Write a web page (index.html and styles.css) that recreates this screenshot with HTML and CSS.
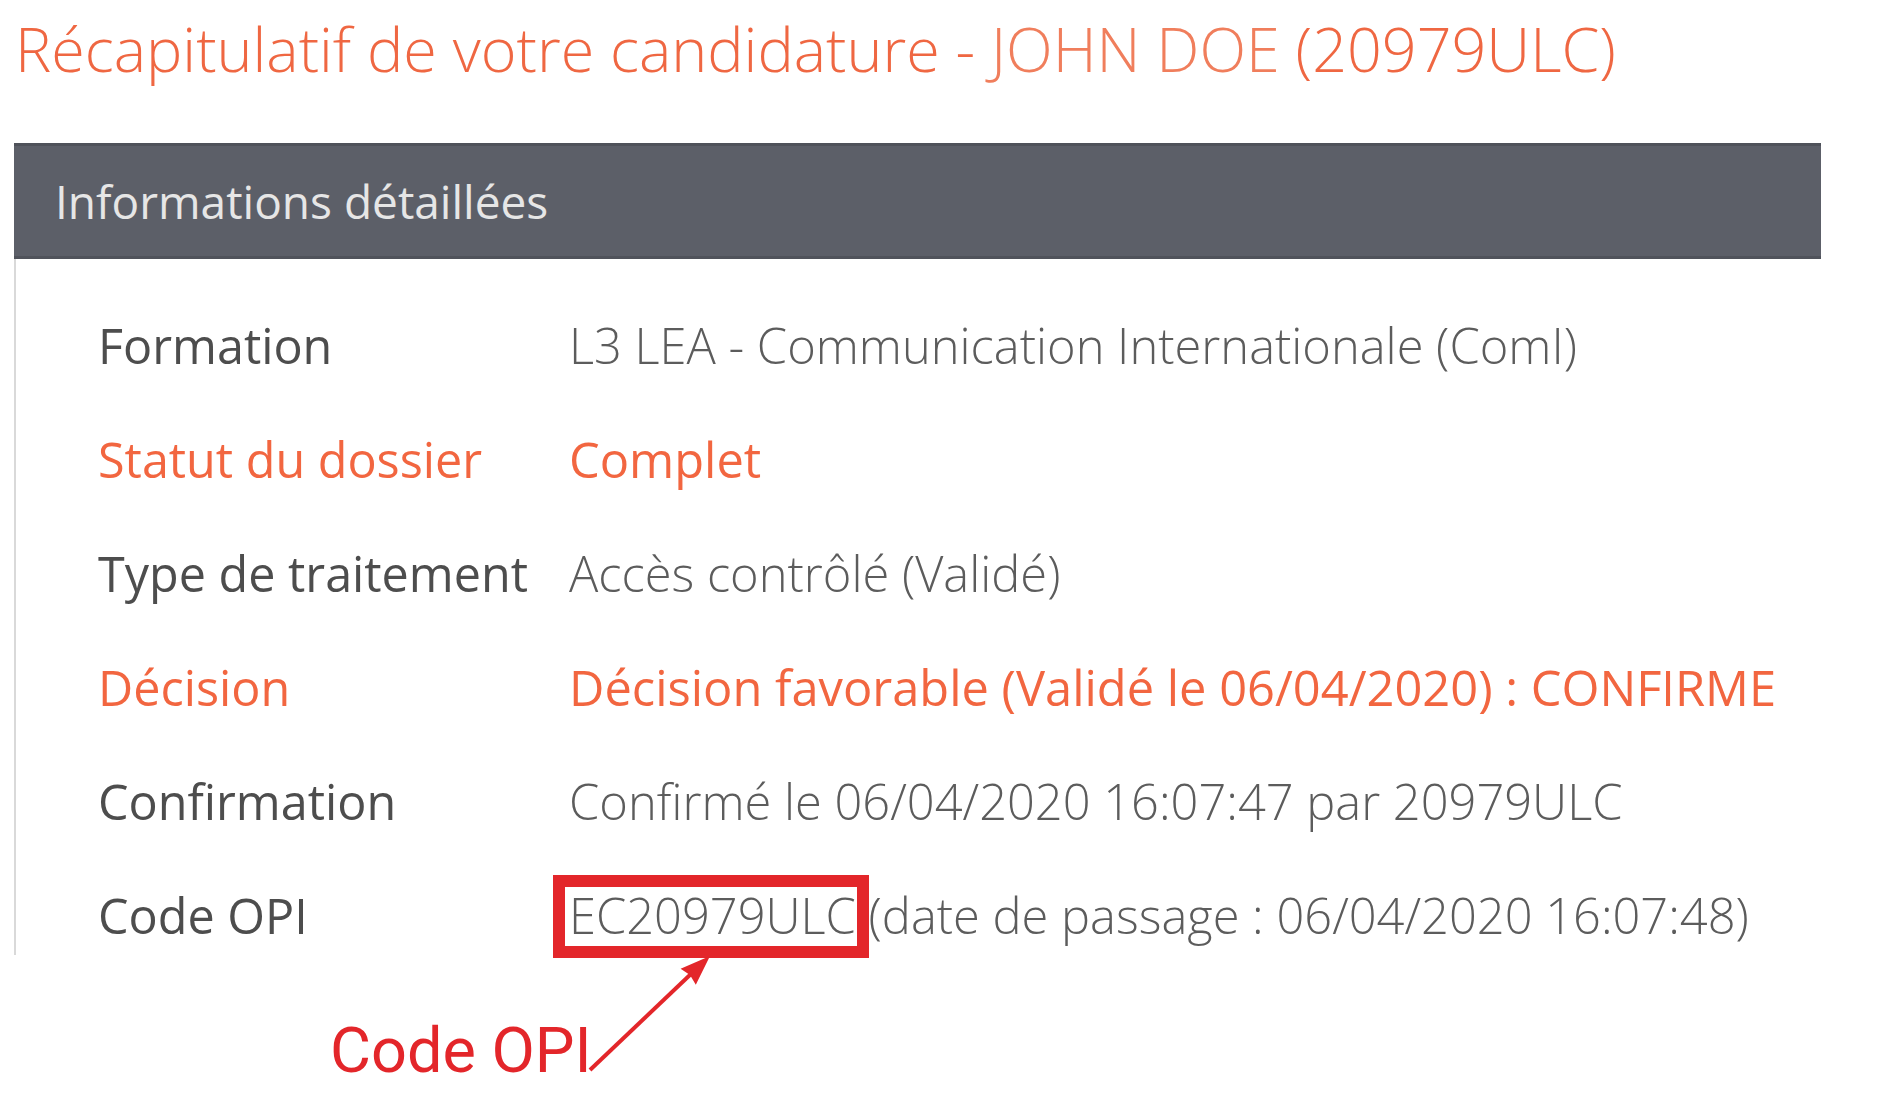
FILE: index.html
```html
<!DOCTYPE html>
<html lang="fr">
<head>
    <meta charset="utf-8">
    <title>Récapitulatif de votre candidature</title>
    <link rel="stylesheet" href="styles.css">
</head>
<body>
    <div class="page">
        <h1 class="title">Récapitulatif de votre candidature - <span class="name">JOHN DOE</span> (20979ULC)</h1>

        <div class="panel">
            <div class="panel-head">Informations détaillées</div>
            <div class="panel-body">
                <div class="row">
                    <div class="label">Formation</div>
                    <div class="value">L3 LEA - Communication Internationale (ComI)</div>
                </div>
                <div class="row alert">
                    <div class="label">Statut du dossier</div>
                    <div class="value">Complet</div>
                </div>
                <div class="row">
                    <div class="label">Type de traitement</div>
                    <div class="value">Accès contrôlé (Validé)</div>
                </div>
                <div class="row alert">
                    <div class="label">Décision</div>
                    <div class="value">Décision favorable (Validé le 06/04/2020) : CONFIRME</div>
                </div>
                <div class="row">
                    <div class="label">Confirmation</div>
                    <div class="value">Confirmé le 06/04/2020 16:07:47 par 20979ULC</div>
                </div>
                <div class="row">
                    <div class="label">Code OPI</div>
                    <div class="value"><span class="code">EC20979ULC</span> (date de passage : 06/04/2020 16:07:48)</div>
                </div>
            </div>
        </div>

        <div class="note">Code OPI</div>

        <!-- fleche de l'annotation -->
        <svg class="arrow" width="1886" height="1103" viewBox="0 0 1886 1103">
            <line x1="590" y1="1070" x2="692" y2="973" stroke="#e3262a" stroke-width="4"/>
            <path d="M710 956 L695.8 984.7 L690 975 L680.6 968.7 Z" fill="#e3262a"/>
        </svg>
    </div>
</body>
</html>
```

FILE: styles.css
```css
body {
    margin: 0;
    background: #fff;
    font-family: "Open Sans", "Liberation Sans", sans-serif;
}

.page {
    position: relative;
    padding: 9px 0 0 14px;
    height: 1094px;
    overflow: hidden;
}

.title {
    margin: 0 0 54px 1px;
    font-size: 61px;
    font-weight: 300;
    line-height: 80px;
    color: #ef6742;
    white-space: nowrap;
}

.title .name {
    font-weight: 300;
    color: #f07e5c;
}

.panel {
    width: 1807px;
}

.panel-head {
    display: flex;
    align-items: center;
    box-sizing: border-box;
    height: 116px;
    padding-left: 41px;
    background-color: #5c5f68;
    border-top: 3px solid #4f525a;
    border-bottom: 3px solid #50535b;
    color: #e6e6e6;
    font-size: 46px;
}

.panel-body {
    box-sizing: border-box;
    height: 696px;
    padding: 29px 0 0 82px;
    border-left: 2px solid #d9d9d9;
}

.row {
    display: grid;
    grid-template-columns: 471px auto;
    line-height: 114px;
    white-space: nowrap;
}

.label {
    font-size: 48.5px;
    color: #4d4d4d;
}

.value {
    font-size: 48.8px;
    font-weight: 300;
    color: #5c5c5c;
}

.row.alert .label,
.row.alert .value {
    color: #f26640;
}

.row.alert .value {
    font-weight: 400;
}

.code {
    position: relative;
}

.code::after {
    content: "";
    position: absolute;
    left: -16px;
    right: -13px;
    top: -7px;
    height: 83px;
    box-sizing: border-box;
    border: 12px solid #e3262a;
}

.note {
    margin: 60px 0 0 316px;
    font-family: Roboto, "Liberation Sans", sans-serif;
    font-size: 63px;
    line-height: 72px;
    color: #e3262a;
}

.arrow {
    position: absolute;
    left: 0;
    top: 0;
    pointer-events: none;
}
```
